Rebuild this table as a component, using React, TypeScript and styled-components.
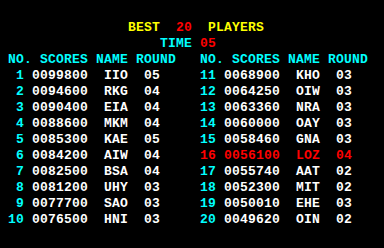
import styled, { createGlobalStyle } from "styled-components";

const GlobalStyle = createGlobalStyle`
  html, body {
    margin: 0;
    padding: 0;
    background: #000;
  }
`;

const Screen = styled.div`
  width: 384px;
  height: 248px;
  background: #000;
  padding-top: 20px;
  box-sizing: border-box;
  font-family: "Liberation Mono", "DejaVu Sans Mono", monospace;
  font-weight: bold;
  font-size: 13px;
  letter-spacing: 0.2px;
  line-height: 16px;
  white-space: pre;
  overflow: hidden;
`;

const Line = styled.div<{ $indent: number }>`
  height: 16px;
  padding-left: ${(p) => p.$indent * 8}px;
`;

interface ColorProps {
  $color: "yellow" | "red" | "cyan" | "white";
}

const palette = {
  yellow: "#ffff00",
  red: "#ff0000",
  cyan: "#00ffff",
  white: "#ffffff",
};

const Txt = styled.span<ColorProps>`
  color: ${(p) => palette[p.$color]};
`;

const Tables = styled.div`
  display: flex;
`;

const Panel = styled.div`
  width: 192px;
  padding-left: 8px;
  box-sizing: border-box;
`;

const HeaderRow = styled.div`
  display: grid;
  grid-template-columns: 32px 56px 40px auto;
  height: 16px;
  color: ${palette.cyan};
`;

const Row = styled.div<{ $highlight?: boolean }>`
  display: grid;
  grid-template-columns: 24px 72px 40px auto;
  height: 16px;
  color: ${(p) => (p.$highlight ? palette.red : palette.white)};
`;

const Rank = styled.span<{ $highlight?: boolean }>`
  text-align: right;
  padding-right: 8px;
  color: ${(p) => (p.$highlight ? palette.red : palette.cyan)};
`;

type Entry = [string, string, string];

const scores: Entry[] = [
  ["0099800", "IIO", "05"],
  ["0094600", "RKG", "04"],
  ["0090400", "EIA", "04"],
  ["0088600", "MKM", "04"],
  ["0085300", "KAE", "05"],
  ["0084200", "AIW", "04"],
  ["0082500", "BSA", "04"],
  ["0081200", "UHY", "03"],
  ["0077700", "SAO", "03"],
  ["0076500", "HNI", "03"],
  ["0068900", "KHO", "03"],
  ["0064250", "OIW", "03"],
  ["0063360", "NRA", "03"],
  ["0060000", "OAY", "03"],
  ["0058460", "GNA", "03"],
  ["0056100", "LOZ", "04"],
  ["0055740", "AAT", "02"],
  ["0052300", "MIT", "02"],
  ["0050010", "EHE", "03"],
  ["0049620", "OIN", "02"],
];

const HIGHLIGHT = 16;

const ScoreTable = ({ start }: { start: number }) => (
  <Panel>
    <HeaderRow>
      <span>NO.</span>
      <span>SCORES</span>
      <span>NAME</span>
      <span>ROUND</span>
    </HeaderRow>
    {scores.slice(start, start + 10).map(([score, name, round], i) => {
      const rank = start + i + 1;
      const hl = rank === HIGHLIGHT;
      return (
        <Row key={rank} $highlight={hl}>
          <Rank $highlight={hl}>{rank}</Rank>
          <span>{score}</span>
          <span>{name}</span>
          <span>{round}</span>
        </Row>
      );
    })}
  </Panel>
);

export default function App() {
  return (
    <>
      <GlobalStyle />
      <Screen>
        <Line $indent={16}>
          <Txt $color="yellow">{"BEST  "}</Txt>
          <Txt $color="red">20</Txt>
          <Txt $color="yellow">{"  PLAYERS"}</Txt>
        </Line>
        <Line $indent={20}>
          <Txt $color="cyan">{"TIME "}</Txt>
          <Txt $color="red">05</Txt>
        </Line>
        <Tables>
          <ScoreTable start={0} />
          <ScoreTable start={10} />
        </Tables>
      </Screen>
    </>
  );
}
